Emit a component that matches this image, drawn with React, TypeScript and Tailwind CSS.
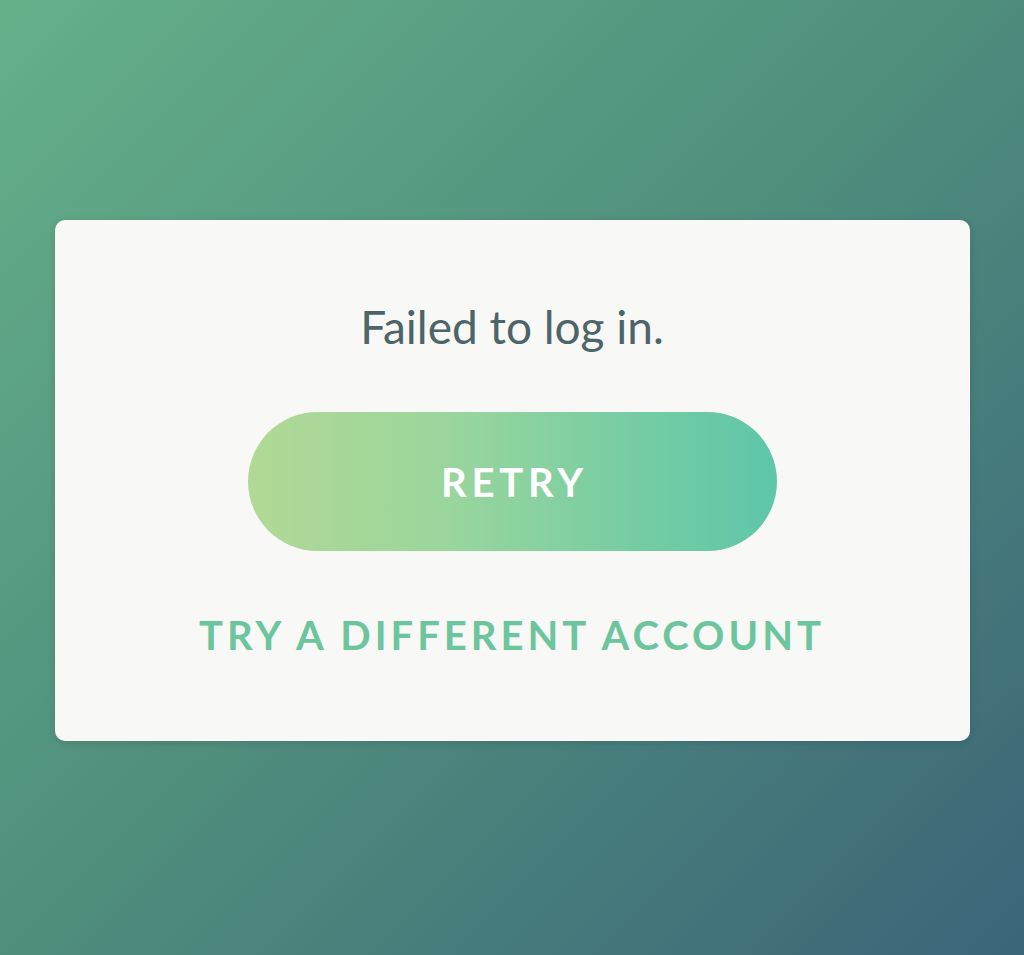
export default function App() {
  return (
    <div
      className="min-h-screen w-full flex items-center justify-center pt-[6px] bg-[linear-gradient(135deg,#65b089_0%,#4f8d7d_50%,#3b6579_100%)]"
      style={{ fontFamily: 'Lato, "Noto Sans", sans-serif' }}
    >
      <div className="w-[915px] h-[521px] rounded-[10px] bg-[#f8f8f6] shadow-[0_2px_8px_rgba(0,0,0,0.12)] flex flex-col items-center pt-[84px]">
        <p className="text-[46px] leading-none text-[#4d6469]">Failed to log in.</p>

        <button className="mt-[62px] w-[529px] h-[139px] rounded-full bg-[linear-gradient(90deg,#b2d995_0%,#98d59d_40%,#74cca3_75%,#5ec6aa_100%)] flex items-center justify-center">
          <span className="text-[40px] leading-none font-bold tracking-[0.12em] text-white pl-[0.12em]">
            RETRY
          </span>
        </button>

        <button className="mt-[64px] text-[40px] leading-none font-bold tracking-[0.1em] text-[#6cc59c]">
          TRY A DIFFERENT ACCOUNT
        </button>
      </div>
    </div>
  );
}
